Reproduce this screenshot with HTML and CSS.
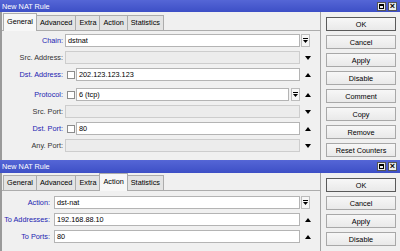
FILE: index.html
```html
<!DOCTYPE html>
<html lang="en">
<head>
    <meta charset="UTF-8">
    <meta name="viewport" content="width=device-width, initial-scale=1.0">
    <title>New NAT Rule</title>
    <link rel="stylesheet" href="styles.css">
</head>
<body>
    <div class="window win-top">
        <div class="titlebar">
            <span class="title">New NAT Rule</span>
            <div class="wbtns"><span class="wbtn"><span class="maxbox"></span></span><span class="wbtn close">&times;</span></div>
        </div>
        <div class="body">
            <div class="main">
                <div class="tabs">
                    <span class="tab active">General</span>
                    <span class="tab">Advanced</span>
                    <span class="tab">Extra</span>
                    <span class="tab">Action</span>
                    <span class="tab">Statistics</span>
                </div>
                <div class="panel">
                    <div class="row">
                        <span class="lbl on">Chain:</span>
                        <div class="ctrl"><div class="field">dstnat</div></div>
                        <div class="side boxed"><span class="dd"><svg width="5" height="6" viewBox="0 0 5 6"><rect x="0" y="0" width="5" height="1"/><path d="M0 2H5L2.5 5Z"/></svg></span></div>
                    </div>
                    <div class="row">
                        <span class="lbl">Src. Address:</span>
                        <div class="ctrl"><div class="field off"></div></div>
                        <div class="side"><svg width="6" height="4" viewBox="0 0 6 4"><path d="M0 0H6L3 4Z"/></svg></div>
                    </div>
                    <div class="row">
                        <span class="lbl on">Dst. Address:</span>
                        <div class="ctrl"><span class="check"></span><div class="field">202.123.123.123</div></div>
                        <div class="side"><svg width="6" height="4" viewBox="0 0 6 4"><path d="M0 4L3 0L6 4Z"/></svg></div>
                    </div>
                    <div class="row group">
                        <span class="lbl on">Protocol:</span>
                        <div class="ctrl"><span class="check"></span><div class="field">6 (tcp)</div><span class="dd inline"><svg width="5" height="6" viewBox="0 0 5 6"><rect x="0" y="0" width="5" height="1"/><path d="M0 2H5L2.5 5Z"/></svg></span></div>
                        <div class="side"><svg width="6" height="4" viewBox="0 0 6 4"><path d="M0 4L3 0L6 4Z"/></svg></div>
                    </div>
                    <div class="row">
                        <span class="lbl">Src. Port:</span>
                        <div class="ctrl"><div class="field off"></div></div>
                        <div class="side"><svg width="6" height="4" viewBox="0 0 6 4"><path d="M0 0H6L3 4Z"/></svg></div>
                    </div>
                    <div class="row">
                        <span class="lbl on">Dst. Port:</span>
                        <div class="ctrl"><span class="check"></span><div class="field">80</div></div>
                        <div class="side"><svg width="6" height="4" viewBox="0 0 6 4"><path d="M0 4L3 0L6 4Z"/></svg></div>
                    </div>
                    <div class="row">
                        <span class="lbl">Any. Port:</span>
                        <div class="ctrl"><div class="field off"></div></div>
                        <div class="side"><svg width="6" height="4" viewBox="0 0 6 4"><path d="M0 0H6L3 4Z"/></svg></div>
                    </div>
                </div>
            </div>
            <div class="buttons">
                <span class="btn default">OK</span>
                <span class="btn">Cancel</span>
                <span class="btn">Apply</span>
                <span class="btn">Disable</span>
                <span class="btn">Comment</span>
                <span class="btn">Copy</span>
                <span class="btn">Remove</span>
                <span class="btn">Reset Counters</span>
            </div>
        </div>
    </div>

    <div class="window win-bottom">
        <div class="titlebar">
            <span class="title">New NAT Rule</span>
            <div class="wbtns"><span class="wbtn"><span class="maxbox"></span></span><span class="wbtn close">&times;</span></div>
        </div>
        <div class="body">
            <div class="main">
                <div class="tabs">
                    <span class="tab">General</span>
                    <span class="tab">Advanced</span>
                    <span class="tab">Extra</span>
                    <span class="tab active">Action</span>
                    <span class="tab">Statistics</span>
                </div>
                <div class="panel">
                    <div class="row">
                        <span class="lbl on">Action:</span>
                        <div class="ctrl"><div class="field">dst-nat</div></div>
                        <div class="side boxed"><span class="dd"><svg width="5" height="6" viewBox="0 0 5 6"><rect x="0" y="0" width="5" height="1"/><path d="M0 2H5L2.5 5Z"/></svg></span></div>
                    </div>
                    <div class="row">
                        <span class="lbl on">To Addresses:</span>
                        <div class="ctrl"><div class="field">192.168.88.10</div></div>
                        <div class="side"><svg width="6" height="4" viewBox="0 0 6 4"><path d="M0 4L3 0L6 4Z"/></svg></div>
                    </div>
                    <div class="row">
                        <span class="lbl on">To Ports:</span>
                        <div class="ctrl"><div class="field">80</div></div>
                        <div class="side"><svg width="6" height="4" viewBox="0 0 6 4"><path d="M0 4L3 0L6 4Z"/></svg></div>
                    </div>
                </div>
            </div>
            <div class="buttons">
                <span class="btn default">OK</span>
                <span class="btn">Cancel</span>
                <span class="btn">Apply</span>
                <span class="btn">Disable</span>
            </div>
        </div>
    </div>
</body>
</html>
```

FILE: styles.css
```css
*{
    margin: 0px;
    padding: 0px;
    box-sizing: border-box;
    font-family: "Liberation Sans", Arial, sans-serif;
}
body{
    width: 400px;
    height: 251px;
    overflow: hidden;
    background-color: #f0f0f0;
    font-size: 7.3px;
    color: #000;
}
.window{
    display: flex;
    flex-direction: column;
    background-color: #f0f0f0;
    overflow: hidden;
}
.win-top{
    height: 160px;
}
.win-bottom{
    height: 91px;
}
.titlebar{
    height: 12px;
    display: flex;
    align-items: center;
    justify-content: space-between;
    padding: 0 3px 0 2px;
    background: linear-gradient(#5566d6, #3d4fc6);
    color: #fff;
}
.win-bottom .titlebar{
    height: 13px;
}
.wbtns{
    display: flex;
    gap: 2px;
}
.wbtn{
    width: 9px;
    height: 9px;
    display: flex;
    align-items: center;
    justify-content: center;
    background-color: #ececec;
    border: 1px solid #555;
    color: #000;
    font-size: 9px;
    font-weight: bold;
    line-height: 7px;
}
.maxbox{
    width: 5px;
    height: 5px;
    border: 1px solid #000;
    border-top-width: 2px;
}
.body{
    flex: 1;
    display: flex;
    border-left: 2px solid #9a9a9a;
}
.main{
    width: 319px;
    display: flex;
    flex-direction: column;
    border-right: 1px solid #a4a4a4;
}
.tabs{
    height: 18px;
    display: flex;
    align-items: flex-end;
    padding-left: 1px;
}
.win-bottom .tabs{
    height: 17px;
}
.tab{
    height: 15px;
    line-height: 14px;
    padding: 0 3px;
    background-color: #e3e3e3;
    border: 1px solid #acacac;
    border-bottom: 0;
    margin-right: -1px;
}
.tab.active{
    height: 18px;
    line-height: 16px;
    background-color: #f7f7f7;
    margin-bottom: -1px;
    position: relative;
    z-index: 1;
}
.panel{
    flex: 1;
    border-top: 1px solid #acacac;
    padding-top: 3px;
}
.win-bottom .panel{
    padding-top: 5px;
}
.row{
    height: 13px;
    display: flex;
    align-items: center;
    margin-bottom: 4px;
}
.row.group{
    margin-top: 7px;
}
.lbl{
    width: 61px;
    text-align: right;
    color: #333;
    white-space: nowrap;
}
.lbl.on{
    color: #2323b0;
}
.win-bottom .lbl{
    width: 48px;
}
.ctrl{
    flex: 1;
    height: 13px;
    display: flex;
    align-items: center;
    margin-left: 2px;
}
.win-bottom .ctrl{
    margin-left: 4px;
}
.field{
    flex: 1;
    height: 13px;
    line-height: 11px;
    padding-left: 2px;
    background-color: #fff;
    border: 1px solid #b4b4b4;
    white-space: nowrap;
}
.field.off{
    background-color: #ececec;
    border-color: #cdcdcd;
}
.check{
    width: 8px;
    height: 8px;
    margin: 0 1px 0 2px;
    background-color: #fff;
    border: 1px solid #8c8c8c;
}
.side{
    width: 20px;
    height: 13px;
    display: flex;
    align-items: center;
    padding-left: 5px;
}
.side.boxed{
    padding-left: 1px;
}
.dd{
    width: 9px;
    height: 13px;
    display: flex;
    align-items: center;
    justify-content: center;
    background-color: #f6f6f6;
    border: 1px solid #bcbcbc;
}
.dd.inline{
    margin-left: 2px;
}
.buttons{
    flex: 1;
    display: flex;
    flex-direction: column;
    gap: 4px;
    padding: 5px 0 0 5px;
}
.btn{
    width: 70px;
    height: 14px;
    display: flex;
    align-items: center;
    justify-content: center;
    background: linear-gradient(#f7f7f7, #e9e9e9);
    border: 1px solid #a8a8a8;
    white-space: nowrap;
}
.btn.default{
    border-color: #5a5a5a;
}
```
